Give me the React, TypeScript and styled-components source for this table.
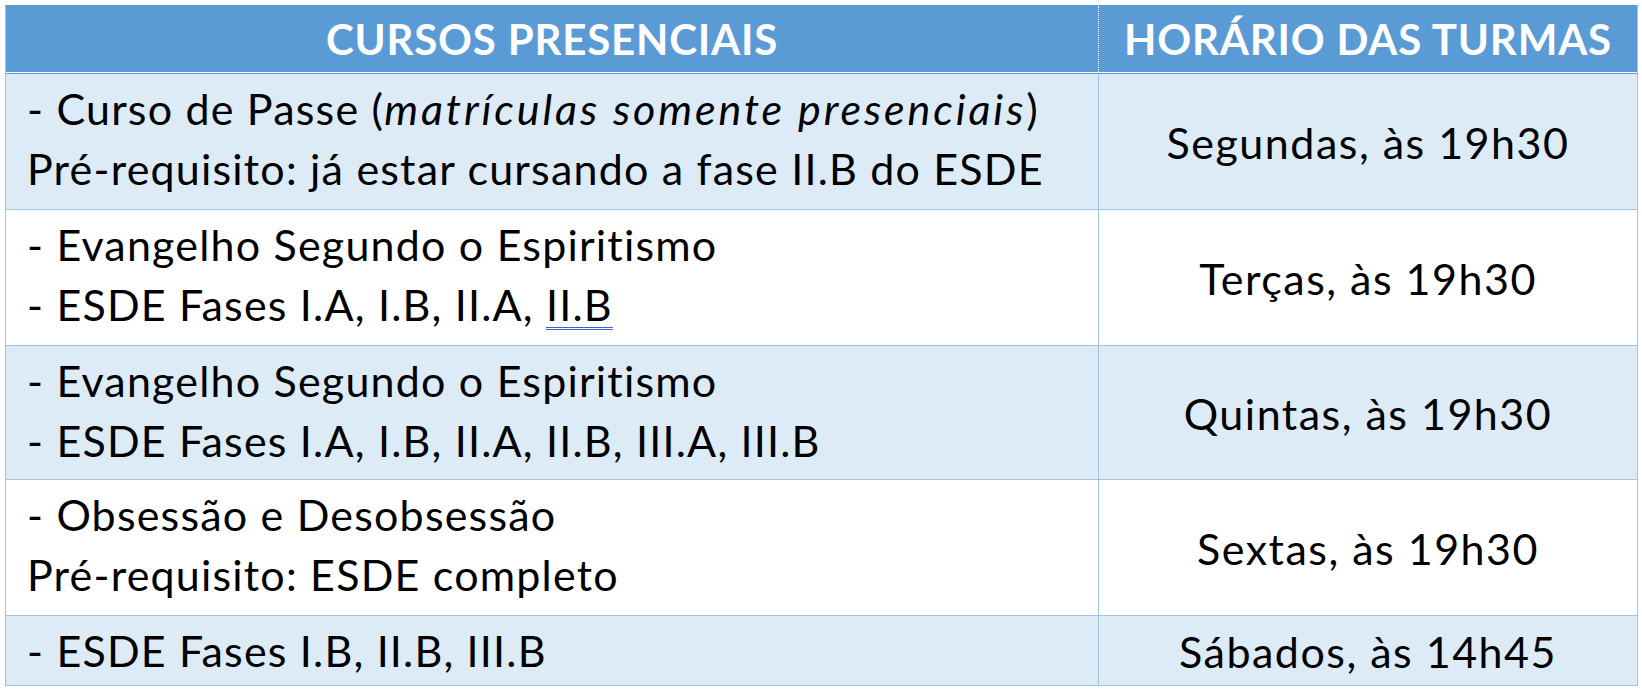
import React from 'react';
import styled, { createGlobalStyle } from 'styled-components';

const GlobalStyle = createGlobalStyle`
  html, body {
    margin: 0;
    padding: 0;
    background: #ffffff;
  }
  body {
    font-family: Lato, "Open Sans", sans-serif;
    color: #000000;
  }
`;

const Page = styled.div`
  padding: 5px;
`;

const Table = styled.div`
  width: 1633px;
  box-sizing: border-box;
  border: 1px solid #9dc3e6;
  border-top-color: #5b9bd5;
  display: flex;
  flex-direction: column;
`;

const HeaderRow = styled.div`
  display: grid;
  grid-template-columns: 1092px 1fr;
  height: 67px;
  box-sizing: border-box;
  background: #5b9bd5;
  border-bottom: 1px solid #ffffff;
`;

const HeadCell = styled.div<{ $divided?: boolean }>`
  display: flex;
  align-items: center;
  justify-content: center;
  color: #ffffff;
  font-weight: 700;
  font-size: 42px;
  line-height: 60px;
  letter-spacing: 0.8px;
  border-left: ${(p) => (p.$divided ? '1px dotted #ffffff' : 'none')};
`;

const Row = styled.div<{ $shaded: boolean; $h: number; $first: boolean }>`
  display: grid;
  grid-template-columns: 1092px 1fr;
  height: ${(p) => p.$h}px;
  box-sizing: border-box;
  background: ${(p) => (p.$shaded ? '#ddebf7' : '#ffffff')};
  border-top: 1px solid ${(p) => (p.$first ? '#5b9bd5' : '#9dc3e6')};
`;

const CourseCell = styled.div`
  padding: 5px 0 0 21px;
  font-size: 43px;
  line-height: 60px;
  letter-spacing: 1.2px;
`;

const Line = styled.div`
  white-space: nowrap;
`;

const TimeCell = styled.div`
  display: flex;
  align-items: center;
  justify-content: center;
  border-left: 1px solid #9dc3e6;
  font-size: 43px;
  line-height: 60px;
  letter-spacing: 1.5px;
  padding-top: 3px;
`;

const Em = styled.em`
  font-style: italic;
  letter-spacing: 2.9px;
`;

const Flagged = styled.span`
  text-decoration: underline double #3b63c9;
  text-decoration-thickness: 1px;
  text-underline-offset: 6px;
`;

type Course = {
  lines: React.ReactNode[];
  schedule: string;
  shaded: boolean;
  height: number;
};

const courses: Course[] = [
  {
    lines: [
      <>- Curso de Passe (<Em>matrículas somente presenciais</Em>)</>,
      'Pré-requisito: já estar cursando a fase II.B do ESDE',
    ],
    schedule: 'Segundas, às 19h30',
    shaded: true,
    height: 136,
  },
  {
    lines: [
      '- Evangelho Segundo o Espiritismo',
      <>- ESDE Fases I.A, I.B, II.A, <Flagged>II.B</Flagged></>,
    ],
    schedule: 'Terças, às 19h30',
    shaded: false,
    height: 136,
  },
  {
    lines: [
      '- Evangelho Segundo o Espiritismo',
      '- ESDE Fases I.A, I.B, II.A, II.B, III.A, III.B',
    ],
    schedule: 'Quintas, às 19h30',
    shaded: true,
    height: 134,
  },
  {
    lines: ['- Obsessão e Desobsessão', 'Pré-requisito: ESDE completo'],
    schedule: 'Sextas, às 19h30',
    shaded: false,
    height: 136,
  },
  {
    lines: ['- ESDE Fases I.B, II.B, III.B'],
    schedule: 'Sábados, às 14h45',
    shaded: true,
    height: 70,
  },
];

export default function App(): JSX.Element {
  return (
    <Page>
      <GlobalStyle />
      <Table>
        <HeaderRow>
          <HeadCell>CURSOS PRESENCIAIS</HeadCell>
          <HeadCell $divided>HORÁRIO DAS TURMAS</HeadCell>
        </HeaderRow>
        {courses.map((c, i) => (
          <Row key={i} $shaded={c.shaded} $h={c.height} $first={i === 0}>
            <CourseCell>
              {c.lines.map((l, j) => (
                <Line key={j}>{l}</Line>
              ))}
            </CourseCell>
            <TimeCell>{c.schedule}</TimeCell>
          </Row>
        ))}
      </Table>
    </Page>
  );
}
